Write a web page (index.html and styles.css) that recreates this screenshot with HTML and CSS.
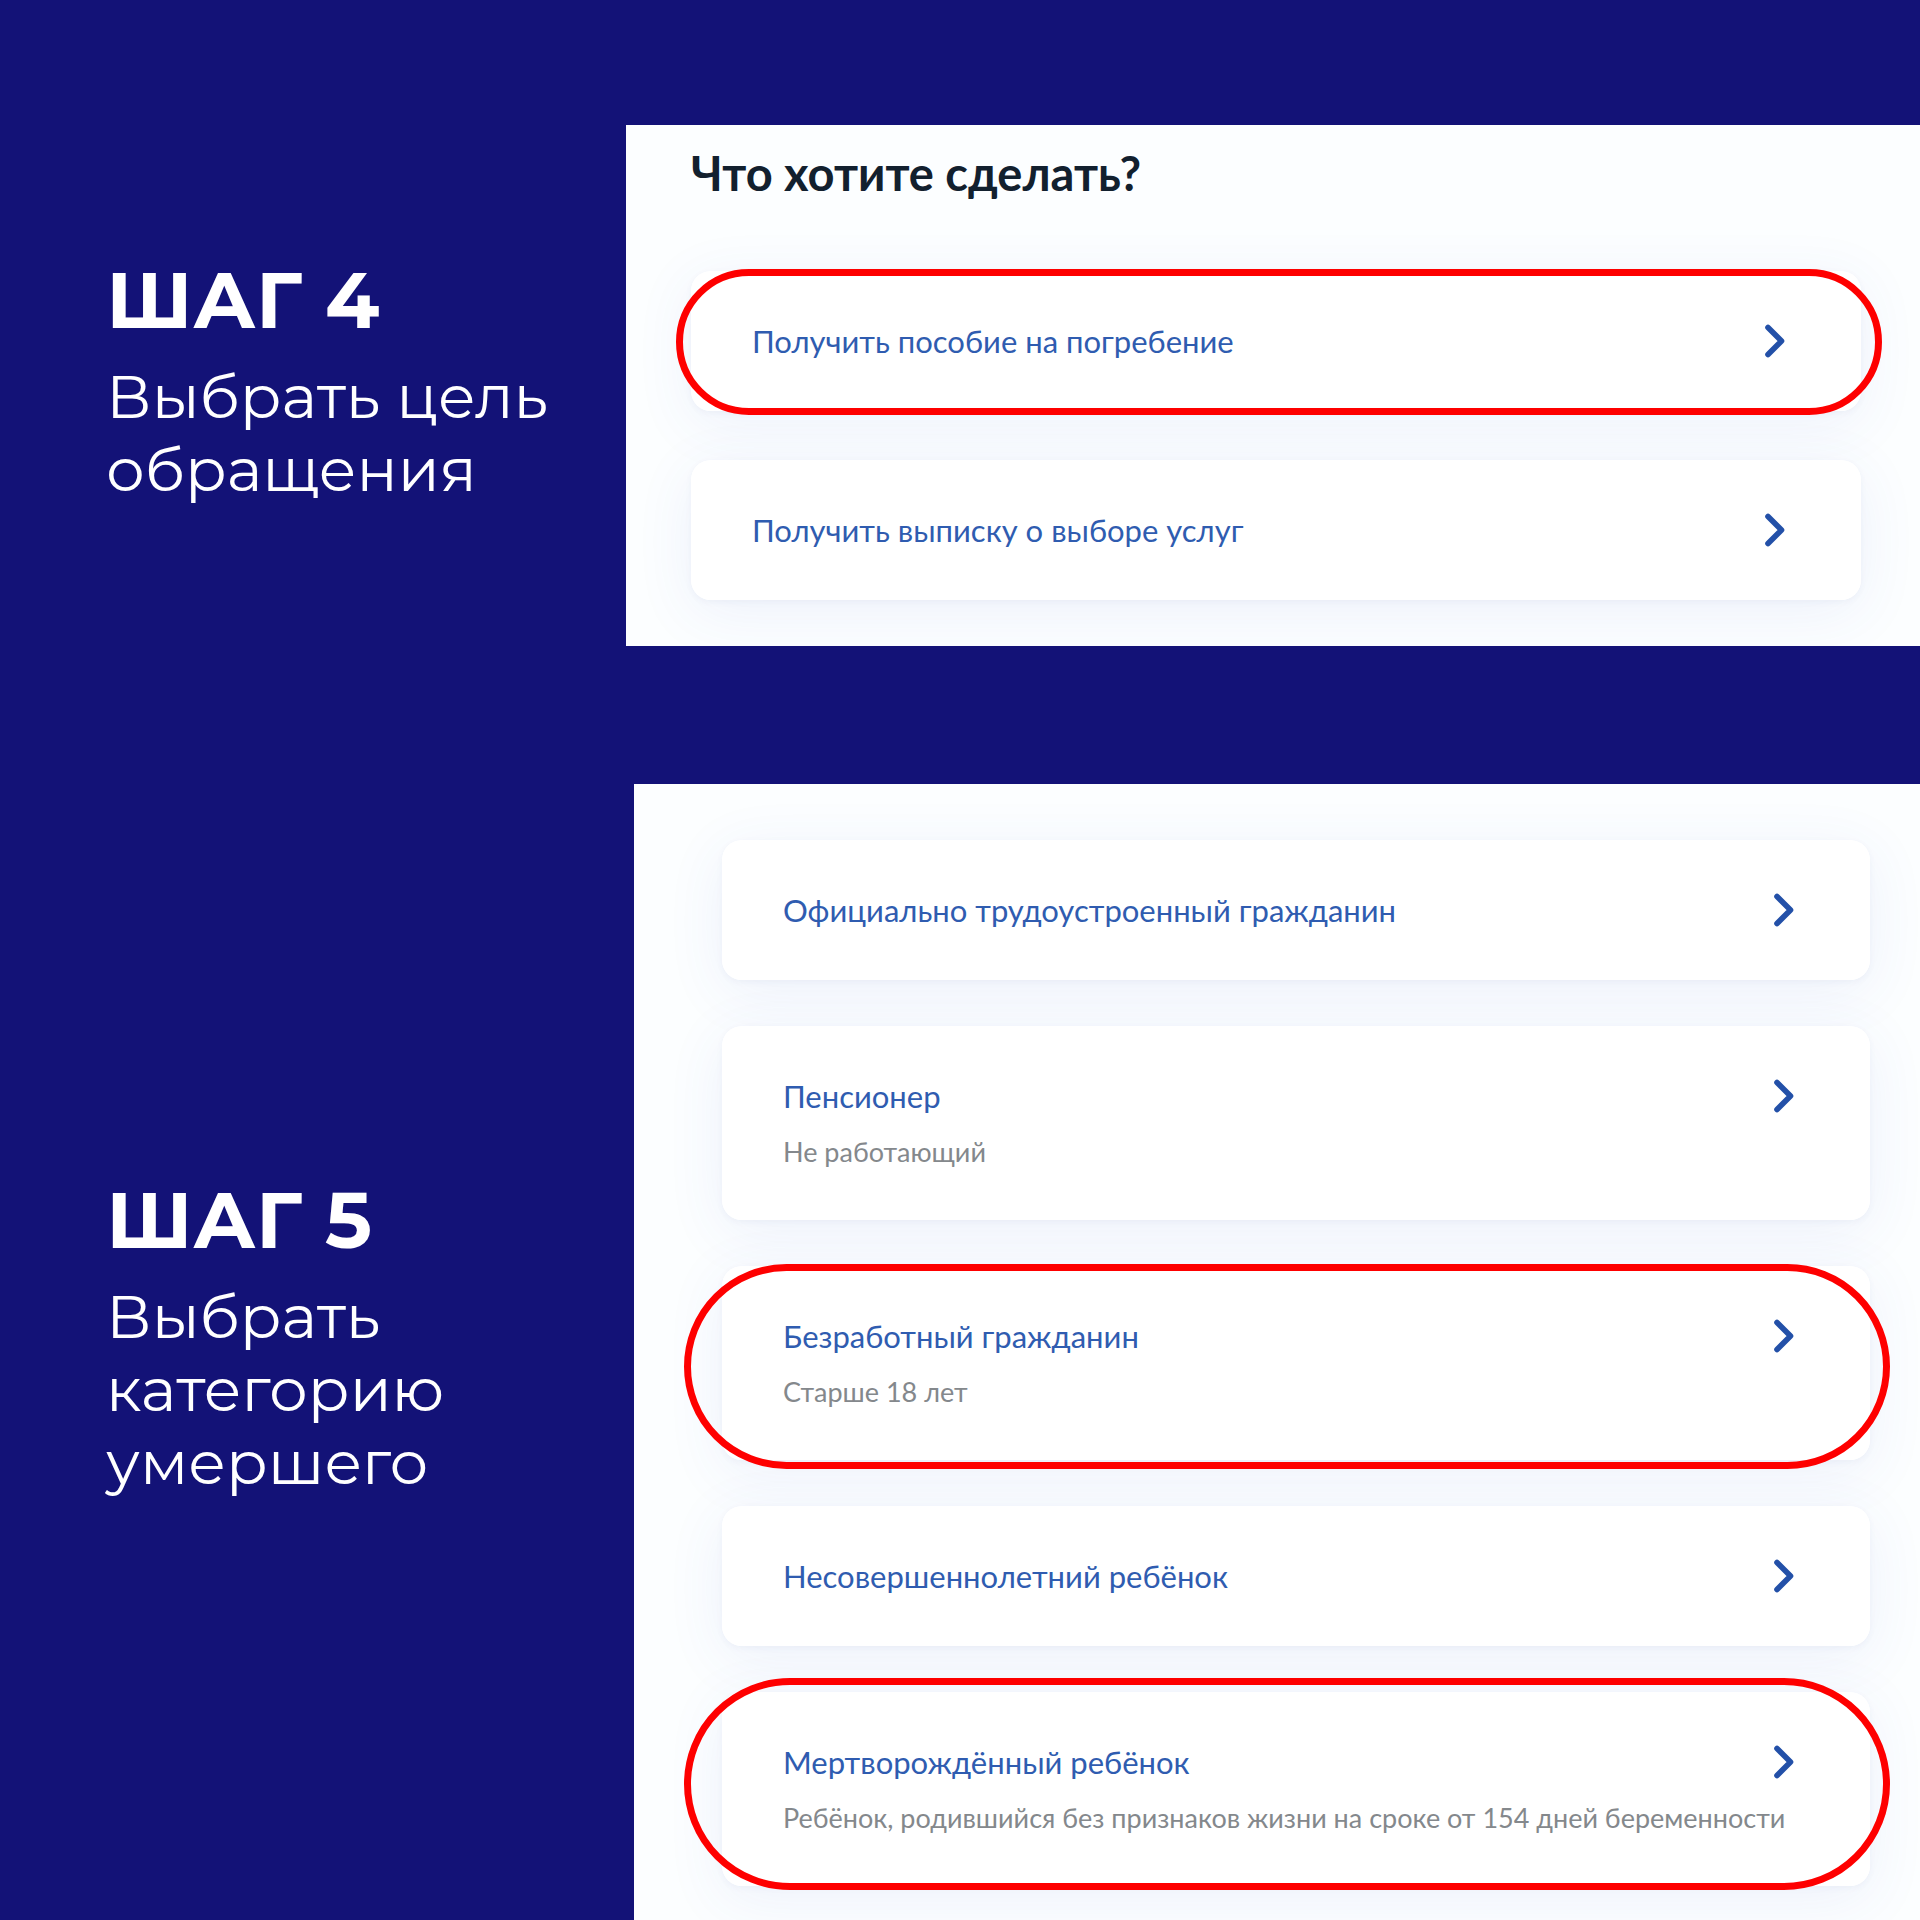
FILE: index.html
```html
<!DOCTYPE html>
<html lang="ru">
<head>
  <meta charset="UTF-8">
  <meta name="viewport" content="width=device-width, initial-scale=1.0">
  <title>Пособие на погребение: шаги 4 и 5</title>
  <link rel="stylesheet" href="styles.css">
</head>
<body>
  <svg class="sprite" aria-hidden="true">
    <symbol id="arrow" viewBox="0 0 20 34">
      <path d="M3 3.5L16.5 17L3 30.5" fill="none" stroke="currentColor" stroke-width="5.6" stroke-linecap="round" stroke-linejoin="round"/>
    </symbol>
  </svg>

  <section class="step step-4">
    <div class="step-text">
      <h2>ШАГ 4</h2>
      <p>Выбрать цель<br>обращения</p>
    </div>
    <div class="panel">
      <h1 class="panel-title">Что хотите сделать?</h1>
      <ul class="cards">
        <li>
          <a class="card marked" href="#">
            <span class="card-title">Получить пособие на погребение</span>
            <svg class="arrow"><use href="#arrow"/></svg>
          </a>
        </li>
        <li>
          <a class="card" href="#">
            <span class="card-title">Получить выписку о выборе услуг</span>
            <svg class="arrow"><use href="#arrow"/></svg>
          </a>
        </li>
      </ul>
    </div>
  </section>

  <section class="step step-5">
    <div class="step-text">
      <h2>ШАГ 5</h2>
      <p>Выбрать<br>категорию<br>умершего</p>
    </div>
    <div class="panel">
      <ul class="cards">
        <li>
          <a class="card" href="#">
            <span class="card-title">Официально трудоустроенный гражданин</span>
            <svg class="arrow"><use href="#arrow"/></svg>
          </a>
        </li>
        <li>
          <a class="card" href="#">
            <span class="card-title">Пенсионер</span>
            <svg class="arrow"><use href="#arrow"/></svg>
            <span class="card-note">Не работающий</span>
          </a>
        </li>
        <li>
          <a class="card marked marked-low" href="#">
            <span class="card-title">Безработный гражданин</span>
            <svg class="arrow"><use href="#arrow"/></svg>
            <span class="card-note">Старше 18 лет</span>
          </a>
        </li>
        <li>
          <a class="card" href="#">
            <span class="card-title">Несовершеннолетний ребёнок</span>
            <svg class="arrow"><use href="#arrow"/></svg>
          </a>
        </li>
        <li>
          <a class="card marked marked-high" href="#">
            <span class="card-title">Мертворождённый ребёнок</span>
            <svg class="arrow"><use href="#arrow"/></svg>
            <span class="card-note">Ребёнок, родившийся без признаков жизни на сроке от 154 дней беременности</span>
          </a>
        </li>
      </ul>
    </div>
  </section>
</body>
</html>
```

FILE: styles.css
```css
* {
  box-sizing: border-box;
}

body {
  margin: 0;
  padding-top: 125px;
  background: #131277;
  font-family: Lato, "Open Sans", sans-serif;
}

.sprite {
  display: none;
}

/* шаг: подпись слева, экран справа */
.step {
  display: grid;
  grid-template-columns: 626px 1fr;
}

.step-5 {
  grid-template-columns: 634px 1fr;
  margin-top: 138px;
}

.step-text {
  align-self: center;
  padding: 0 0 2px 106px;
  color: #fff;
  font-family: Montserrat, Inter, sans-serif;
}

.step-5 .step-text {
  padding-bottom: 22px;
}

.step-text h2 {
  margin: 0 0 24px;
  font-size: 79px;
  line-height: 72px;
  font-weight: 700;
}

.step-text p {
  margin: 0;
  font-size: 61px;
  line-height: 73px;
  font-weight: 400;
}

.panel {
  overflow: hidden;
  padding: 20px 59px 46px 65px;
  background: #fcfeff;
}

.step-5 .panel {
  padding: 56px 50px 34px 88px;
}

.panel-title {
  margin: 0 0 70px;
  color: #12202e;
  font-size: 47px;
  line-height: 56px;
  font-weight: 700;
}

.cards {
  display: flex;
  flex-direction: column;
  gap: 49px;
  margin: 0;
  padding: 0;
  list-style: none;
  isolation: isolate;
}

.step-5 .cards {
  gap: 46px;
}

.card {
  position: relative;
  display: grid;
  grid-template-columns: 1fr 20px;
  align-items: center;
  padding: 48px 76px 48px 61px;
  border-radius: 20px;
  background: #fff;
  text-decoration: none;
}

/* тень лежит под всеми карточками */
.card::before {
  content: "";
  position: absolute;
  inset: 0;
  z-index: -1;
  border-radius: 20px;
  box-shadow: 0 12px 60px rgba(60, 90, 210, 0.08), 0 2px 6px rgba(60, 80, 140, 0.05);
}

.card-title {
  color: #2f5cb0;
  font-size: 31px;
  line-height: 44px;
}

.card-note {
  grid-column: 1 / -1;
  margin-top: 14px;
  color: #84888c;
  font-size: 27px;
  line-height: 40px;
  white-space: nowrap;
}

.arrow {
  width: 20px;
  height: 34px;
  color: #2350a8;
}

/* красная обводка нужного пункта */
.marked::after {
  content: "";
  position: absolute;
  inset: -2px -21px -4px -15px;
  border: 7px solid #fe0000;
  border-radius: 120px;
  pointer-events: none;
}

.marked-low::after {
  inset: -2px -20px -9px -38px;
}

.marked-high::after {
  inset: -14px -20px -4px -38px;
}
```
